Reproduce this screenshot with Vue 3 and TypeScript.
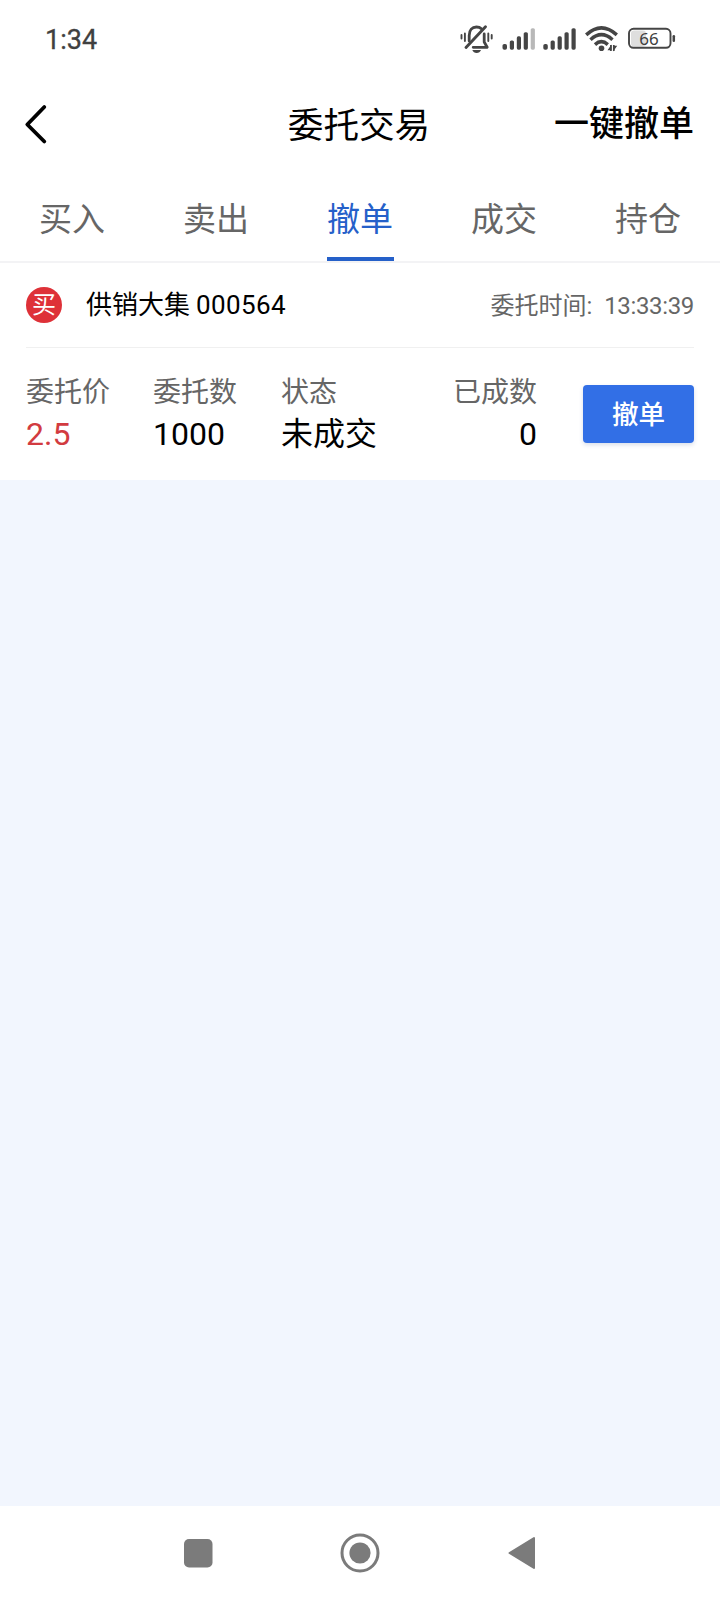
<script setup lang="ts">
interface Tab {
  label: string
  active?: boolean
}

interface Field {
  label: string
  value: string
  kind: string
}

const tabs: Tab[] = [
  { label: '买入' },
  { label: '卖出' },
  { label: '撤单', active: true },
  { label: '成交' },
  { label: '持仓' },
]

const fields: Field[] = [
  { label: '委托价', value: '2.5', kind: 'price' },
  { label: '委托数', value: '1000', kind: 'count' },
  { label: '状态', value: '未成交', kind: 'state' },
  { label: '已成数', value: '0', kind: 'done' },
]
</script>

<template>
  <div class="screen">
    <div class="status">
      <span class="clock">1:34</span>
      <svg class="indicators" width="230" height="40" viewBox="450 20 230 40" fill="none">
        <g stroke="#454545" stroke-width="2" stroke-linecap="round">
          <path d="M461.500 35v3.500M464.900 33.500v7.500M488.300 33.500v7.500M491.700 35v3.500" stroke-width="1.900" />
          <path d="M469.200 41v-5.500c0-5.500 3-8.500 7.200-8.500 2.200 0 3.800.6 5 1.800M484.200 34v8l3 5.300h-14" stroke-width="2.800" stroke-linejoin="round" />
          <path d="M466 47.500 485.500 26.800" stroke-width="2.900" />
        </g>
        <path d="M472.300 50h8.700q-1.200 3-4.350 3t-4.350-3z" fill="#454545" />
        <g fill="#454545">
          <rect x="502.500" y="44" width="4.500" height="5.700" rx="1.800" />
          <rect x="509.800" y="40.500" width="4.200" height="9.200" rx="1.600" />
          <rect x="516.800" y="36.300" width="4.200" height="13.400" rx="1.600" />
          <rect x="523.700" y="32.200" width="4.200" height="17.500" rx="1.600" />
          <rect x="530.700" y="28.200" width="4.200" height="21.500" rx="1.600" fill="#b8b8b8" />
          <rect x="543.300" y="44" width="4.500" height="5.700" rx="1.800" />
          <rect x="550.600" y="40.500" width="4.200" height="9.200" rx="1.600" />
          <rect x="557.600" y="36.300" width="4.200" height="13.400" rx="1.600" />
          <rect x="564.500" y="32.200" width="4.200" height="17.500" rx="1.600" />
          <rect x="571.500" y="28.200" width="4.200" height="21.500" rx="1.600" />
          <circle cx="601.500" cy="48.200" r="2.800" />
        </g>
        <g stroke="#454545" stroke-width="3.500">
          <path d="M586.200 34.900q15.200-14 30.600 0" />
          <path d="M590.500 39.700q10.900-10 22 0" />
          <path d="M595 44.600q6.400-5.800 12.800 0" />
        </g>
        <path d="M610.900 45v6M613.800 45v6" stroke="#454545" stroke-width="1.700" />
        <path d="M611.500 44.500v5.800h-4zM613.200 51.500v-5.800h4z" fill="#454545" />
        <rect x="631" y="30.500" width="15" height="16" rx="3" fill="#dedede" />
        <rect x="629" y="28.800" width="41.500" height="19" rx="4.500" stroke="#454545" stroke-width="1.900" />
        <path d="M673.800 36.200v4.600" stroke="#454545" stroke-width="2.500" stroke-linecap="round" />
        <text class="charge" x="649" y="44.800" text-anchor="middle">66</text>
      </svg>
    </div>

    <header class="header">
      <svg class="back" width="24" height="42" viewBox="0 0 24 42" fill="none">
        <path d="M20.300 3 3.300 20.500 20.300 37.500" stroke="#000" stroke-width="3.800" stroke-linecap="round" stroke-linejoin="round" />
      </svg>
      <h1 class="title">委托交易</h1>
      <span class="cancel-all">一键撤单</span>
    </header>

    <nav class="tabs">
      <div v-for="tab in tabs" :key="tab.label" class="tab">
        <span class="tab-label" :class="{ active: tab.active }">{{ tab.label }}</span>
      </div>
    </nav>

    <section class="order">
      <div class="order-head">
        <span class="badge">买</span>
        <span class="stock">供销大集<span class="code">000564</span></span>
        <span class="time">委托时间:<span class="time-value">13:33:39</span></span>
      </div>
      <div class="order-body">
        <div v-for="field in fields" :key="field.label" class="field" :class="field.kind">
          <span class="field-label">{{ field.label }}</span>
          <span class="field-value">{{ field.value }}</span>
        </div>
        <button class="cancel">撤单</button>
      </div>
    </section>

    <main class="blank"></main>

    <footer class="system-nav">
      <svg width="40" height="40" viewBox="0 0 40 40"><rect x="6" y="6" width="28.500" height="28.500" rx="5" fill="#7b7b7b" /></svg>
      <svg width="40" height="40" viewBox="0 0 40 40"><circle cx="20" cy="20" r="18" fill="none" stroke="#7b7b7b" stroke-width="3" /><circle cx="20" cy="20" r="10.600" fill="#7b7b7b" /></svg>
      <svg width="40" height="40" viewBox="0 0 40 40"><path d="M7.500 20 32 5v30z" fill="#7b7b7b" stroke="#7b7b7b" stroke-width="2" stroke-linejoin="round" /></svg>
    </footer>
  </div>
</template>

<style>
body {
  margin: 0;
  background: #fff;
}
</style>

<style scoped>
.screen {
  display: flex;
  flex-direction: column;
  width: 720px;
  height: 1600px;
  background: #fff;
  color: #000;
  font-family: Roboto, "Noto Sans CJK SC", sans-serif;
  overflow: hidden;
}
.status {
  display: flex;
  justify-content: space-between;
  align-items: flex-start;
  height: 58px;
  padding: 20px 40px 0 45px;
}
.clock {
  font-size: 27px;
  line-height: 40px;
  color: #404040;
  -webkit-text-stroke: 0.3px #404040;
}
.charge {
  font: 400 17px "Noto Sans", sans-serif;
  fill: #404040;
}
.header {
  display: grid;
  grid-template-columns: 1fr auto 1fr;
  align-items: center;
  height: 92px;
  padding: 0 26px 0 24px;
}
.back {
  margin-top: 2px;
}
.title {
  margin: 4px 0 0;
  font-size: 35.6px;
  font-weight: 400;
  line-height: 50px;
}
.cancel-all {
  justify-self: end;
  margin-top: 2px;
  font-size: 35px;
  font-weight: 500;
  line-height: 50px;
}
.tabs {
  display: flex;
  height: 91px;
  border-bottom: 2px solid #f3f3f5;
}
.tab {
  display: flex;
  flex: 1;
  justify-content: center;
}
.tab-label {
  box-sizing: border-box;
  height: 91px;
  padding: 18px 0.5px 0;
  border-bottom: 4px solid transparent;
  color: #666;
  font-size: 33px;
  line-height: 64px;
}
.tab-label.active {
  color: #2560c9;
  border-bottom-color: #2560c9;
}
.order-head {
  display: flex;
  align-items: center;
  height: 84px;
  margin: 0 26px;
  border-bottom: 1px solid #f0f0f0;
}
.badge {
  width: 36px;
  height: 36px;
  margin-right: 24px;
  border-radius: 50%;
  background: #de3138;
  color: #fff;
  font-size: 24px;
  line-height: 37px;
  text-align: center;
}
.stock {
  font-size: 26px;
  line-height: 38px;
}
.code {
  margin-left: 6px;
  letter-spacing: 0.4px;
}
.time {
  margin: 2px 0 0 auto;
  color: #666;
  font-size: 24px;
  line-height: 38px;
}
.time-value {
  margin-left: 12px;
  letter-spacing: -0.35px;
}
.order-body {
  display: flex;
  height: 132px;
  padding: 0 26px;
}
.field {
  display: flex;
  flex-direction: column;
  padding-top: 25px;
}
.price {
  width: 127px;
}
.count {
  width: 128px;
}
.state {
  width: 127px;
}
.done {
  width: 129px;
  align-items: flex-end;
}
.field-label {
  color: #666;
  font-size: 28px;
  line-height: 40px;
}
.field-value {
  font-size: 32px;
  line-height: 42px;
}
.price .field-value {
  color: #d23b40;
}
.cancel {
  width: 111px;
  height: 58px;
  margin: 37px 0 0 auto;
  padding: 2px 0 0;
  border: 0;
  border-radius: 4px;
  background: #326fe6;
  box-shadow: 0 2px 4px rgba(50, 80, 140, 0.18);
  color: #fff;
  font-family: inherit;
  font-size: 26.6px;
  font-weight: 500;
  line-height: 56px;
}
.blank {
  flex: 1;
  background: #f2f6fe;
}
.system-nav {
  display: flex;
  justify-content: center;
  align-items: center;
  gap: 122px;
  height: 94px;
}
</style>
